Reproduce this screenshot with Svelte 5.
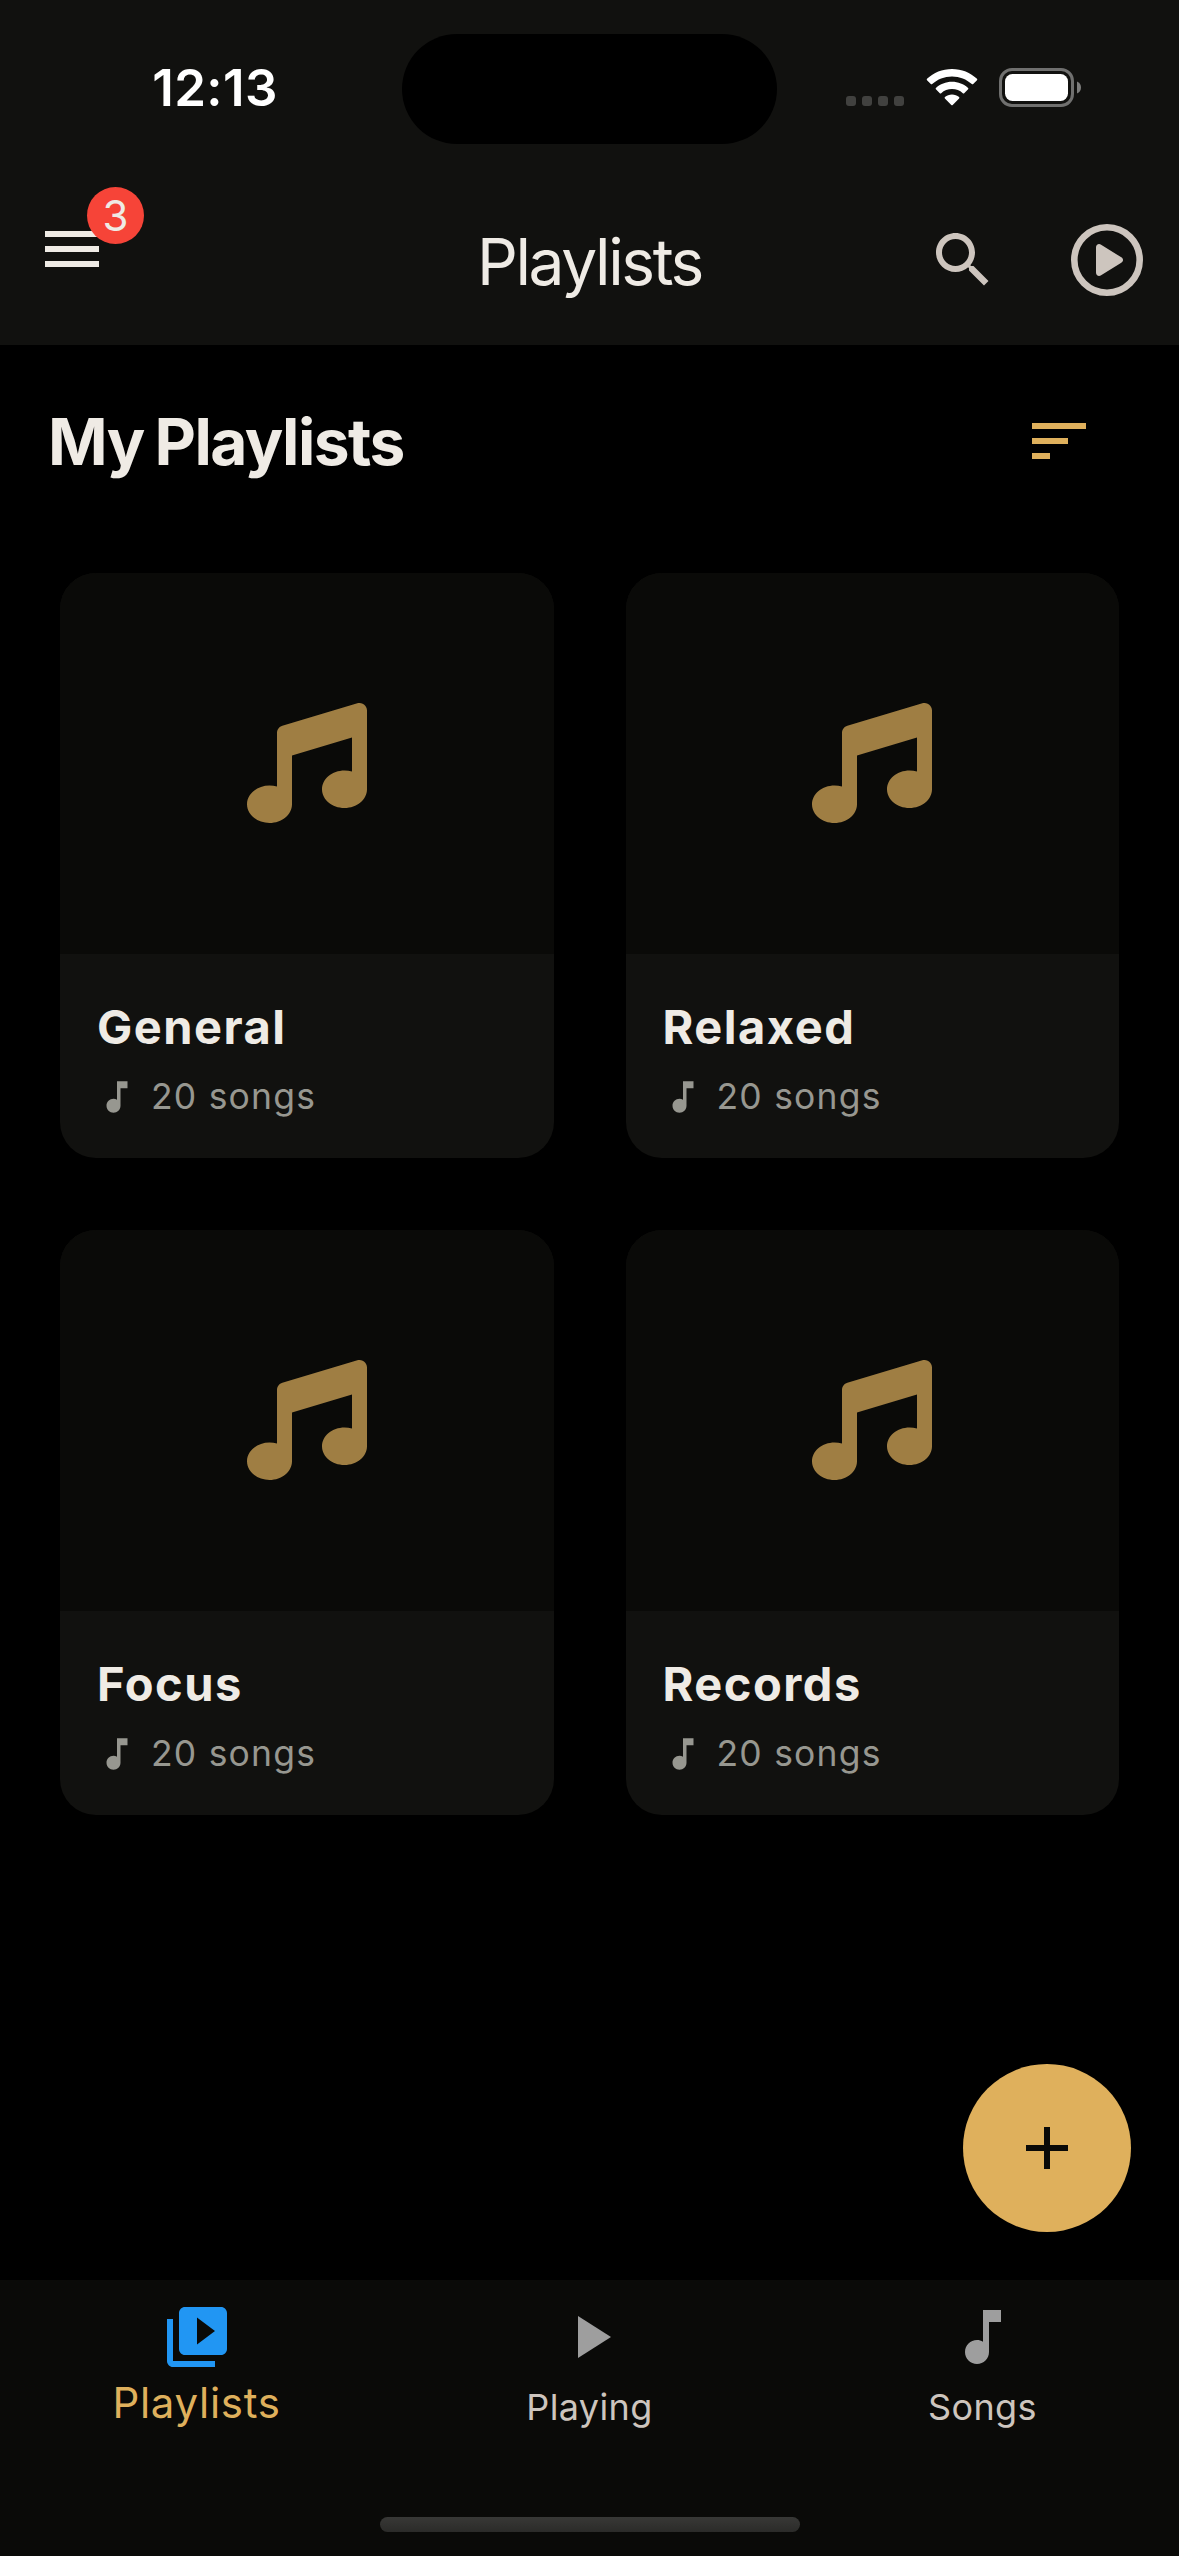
<script lang="ts">
  type Playlist = { name: string; songs: number };
  type Tab = { id: string; label: string; path: string };

  const playlists: Playlist[] = [
    { name: "General", songs: 20 },
    { name: "Relaxed", songs: 20 },
    { name: "Focus", songs: 20 },
    { name: "Records", songs: 20 },
  ];

  const notePath =
    "M12 3v10.55c-.59-.34-1.27-.55-2-.55-2.21 0-4 1.79-4 4s1.79 4 4 4 4-1.79 4-4V7h4V3h-6z";

  const tabs: Tab[] = [
    {
      id: "playlists",
      label: "Playlists",
      path: "M4 6H2v14c0 1.1.9 2 2 2h14v-2H4V6zm16-4H8c-1.1 0-2 .9-2 2v12c0 1.1.9 2 2 2h12c1.1 0 2-.9 2-2V4c0-1.1-.9-2-2-2zm-8 12.5v-9l6 4.5-6 4.5z",
    },
    { id: "playing", label: "Playing", path: "M8 5v14l11-7z" },
    { id: "songs", label: "Songs", path: notePath },
  ];

  let active = $state("playlists");
  let notifications = $state(3);
</script>

<div class="screen">
  <header>
    <div class="status">
      <span class="time">12:13</span>
      <div class="island"></div>
      <div class="indicators">
        <div class="dots">
          {#each [0, 1, 2, 3] as dot (dot)}
            <i></i>
          {/each}
        </div>
        <svg class="wifi" viewBox="0 0 50 37">
          <path d="M25 0C34.700 0 43.500 3.700 50 9.800 50.400 10.200 50.400 10.800 50 11.200L46.200 15C45.800 15.400 45.200 15.400 44.800 15 39.600 10.200 32.600 7.400 25 7.400S10.400 10.200 5.200 15C4.800 15.400 4.200 15.400 3.800 15L0 11.200C-.4 10.800-.4 10.200 0 9.800 6.500 3.700 15.300 0 25 0z" />
          <path d="M25 12.700C31.200 12.700 36.800 15 41.100 18.900 41.500 19.300 41.500 19.900 41.100 20.300L37.200 24.200C36.800 24.600 36.200 24.600 35.800 24.200 32.900 21.600 29.100 20.100 25 20.100S17.100 21.600 14.200 24.200C13.800 24.600 13.200 24.600 12.800 24.200L8.900 20.300C8.500 19.900 8.500 19.300 8.900 18.900 13.200 15 18.800 12.700 25 12.700z" />
          <path d="M25 25.400C27.700 25.400 30.200 26.400 32.100 28 32.500 28.400 32.500 29 32.100 29.400L25.700 35.900C25.300 36.300 24.700 36.300 24.300 35.900L17.900 29.400C17.500 29 17.500 28.400 17.900 28 19.800 26.400 22.300 25.400 25 25.400z" />
        </svg>
        <svg class="battery" viewBox="0 0 82 39">
          <rect x="1.500" y="1.500" width="72" height="36" rx="11.500" fill="none" stroke="#70706f" stroke-width="3" />
          <rect x="6" y="6" width="63" height="27" rx="7.500" fill="#fff" />
          <path d="M78 13.500c2.500 1 4 3.300 4 6s-1.500 5-4 6z" fill="#7d7d7c" />
        </svg>
      </div>
    </div>

    <div class="appbar">
      <button type="button" class="menu" aria-label="Menu">
        <svg viewBox="0 0 24 24"><path d="M3 18h18v-2H3v2zm0-5h18v-2H3v2zm0-7v2h18V6H3z" /></svg>
        {#if notifications > 0}
          <span class="badge">{notifications}</span>
        {/if}
      </button>
      <h1>Playlists</h1>
      <div class="actions">
        <button type="button" aria-label="Search">
          <svg viewBox="0 0 24 24">
            <path d="M15.500 14h-.79l-.28-.27C15.410 12.590 16 11.110 16 9.500 16 5.910 13.090 3 9.500 3S3 5.910 3 9.500 5.910 16 9.500 16c1.610 0 3.090-.59 4.230-1.570l.27.28v.79l5 4.990L20.490 19l-4.990-5zm-6 0C7.010 14 5 11.990 5 9.500S7.010 5 9.500 5 14 7.010 14 9.500 11.990 14 9.500 14z" />
          </svg>
        </button>
        <button type="button" aria-label="Now playing">
          <svg viewBox="0 0 72 72">
            <circle cx="36" cy="36" r="32.700" fill="none" stroke="currentColor" stroke-width="6.600" />
            <path d="M25 23.500c0-3 2.700-4.300 5.100-2.800l20.200 12.600c2.300 1.400 2.300 4 0 5.400L30.100 51.300c-2.400 1.500-5.100.2-5.100-2.800z" />
          </svg>
        </button>
      </div>
    </div>
  </header>

  <main>
    <div class="heading">
      <h2>My Playlists</h2>
      <button type="button" class="sort" aria-label="Sort">
        <svg viewBox="0 0 24 24"><path d="M3 18h6v-2H3v2zM3 6v2h18V6H3zm0 7h12v-2H3v2z" /></svg>
      </button>
    </div>

    <div class="grid">
      {#each playlists as playlist (playlist.name)}
        <article class="card">
          <div class="cover">
            <svg viewBox="0 0 512 512">
              <path d="M499.100 6.300c8.100 6 12.900 15.600 12.900 25.700V368c0 44.200-43 80-96 80s-96-35.800-96-80 43-80 96-80c11.200 0 22 1.600 32 4.600V147L192 223.800V432c0 44.200-43 80-96 80s-96-35.800-96-80 43-80 96-80c11.200 0 22 1.600 32 4.600V128c0-14.100 9.300-26.600 22.800-30.700l320-96c9.700-2.900 20.200-1.100 28.300 5z" />
            </svg>
          </div>
          <div class="info">
            <h3>{playlist.name}</h3>
            <p>
              <svg viewBox="0 0 24 24"><path d={notePath} /></svg>
              <span>{playlist.songs} songs</span>
            </p>
          </div>
        </article>
      {/each}
    </div>

    <button type="button" class="fab" aria-label="New playlist">
      <svg viewBox="0 0 24 24"><path d="M19 13h-6v6h-2v-6H5v-2h6V5h2v6h6v2z" /></svg>
    </button>
  </main>

  <nav>
    {#each tabs as tab (tab.id)}
      <button
        type="button"
        class="tab"
        class:active={tab.id === active}
        onclick={() => (active = tab.id)}
      >
        <svg viewBox="0 0 24 24"><path d={tab.path} /></svg>
        <span>{tab.label}</span>
      </button>
    {/each}
    <div class="home"></div>
  </nav>
</div>

<style>
  :global(body) {
    margin: 0;
    background: #000;
  }
  .screen {
    display: flex;
    flex-direction: column;
    width: 1179px;
    height: 2556px;
    overflow: hidden;
    background: #000;
    color: #efebe5;
    font-family: Inter, Roboto, sans-serif;
  }
  h1,
  h2,
  h3,
  p {
    margin: 0;
    white-space: nowrap;
  }
  button {
    margin: 0;
    padding: 0;
    border: 0;
    background: none;
    color: inherit;
    font: inherit;
  }
  svg {
    display: block;
    width: 72px;
    height: 72px;
    flex: none;
    fill: currentColor;
  }

  header {
    height: 345px;
    background: #11110f;
  }
  .status {
    display: grid;
    grid-template-columns: 402px 375px 1fr;
    align-items: center;
    height: 178px;
    color: #fff;
  }
  .time {
    padding: 0 0 2px 28px;
    text-align: center;
    font-size: 51px;
    font-weight: 600;
    line-height: 60px;
    letter-spacing: 0.4px;
  }
  .island {
    height: 110px;
    border-radius: 55px;
    background: #000;
  }
  .indicators {
    display: flex;
    align-items: center;
    padding-left: 69px;
    padding-bottom: 3px;
  }
  .dots {
    display: flex;
    align-self: flex-end;
    gap: 6px;
    margin-bottom: 1px;
  }
  .dots i {
    width: 10px;
    height: 10px;
    border-radius: 3px;
    background: #41413f;
  }
  .wifi {
    width: 50px;
    height: 37px;
    margin-left: 23px;
    overflow: visible;
  }
  .battery {
    width: 82px;
    height: 39px;
    margin-left: 22px;
  }

  .appbar {
    display: grid;
    grid-template-columns: 1fr auto 1fr;
    align-items: center;
    height: 167px;
  }
  .menu {
    position: relative;
    width: 72px;
    margin: -25px 0 0 36px;
  }
  .badge {
    position: absolute;
    left: 51px;
    top: -26px;
    width: 57px;
    height: 57px;
    border-radius: 50%;
    background: #f64438;
    font-size: 42px;
    line-height: 58px;
    text-align: center;
  }
  h1 {
    padding-top: 1px;
    font-size: 64px;
    font-weight: 400;
    line-height: 78px;
    letter-spacing: -2.4px;
  }
  .actions {
    display: flex;
    align-items: center;
    justify-content: flex-end;
    gap: 72px;
    padding: 0 36px 3px 0;
    color: #cdc5be;
  }

  main {
    position: relative;
    flex: 1;
  }
  .heading {
    display: flex;
    align-items: center;
    justify-content: space-between;
    height: 192px;
    padding: 0 84px 0 48px;
  }
  h2 {
    padding-top: 2px;
    font-size: 64px;
    font-weight: 700;
    line-height: 78px;
    letter-spacing: -1.5px;
    word-spacing: -3px;
  }
  .sort {
    color: #dfb05c;
  }
  .grid {
    display: grid;
    grid-template-columns: 1fr 1fr;
    gap: 72px;
    padding: 36px 60px 0;
  }
  .card {
    height: 585px;
    border-radius: 36px;
    overflow: hidden;
    background: #11110f;
  }
  .cover {
    display: grid;
    place-items: center;
    height: 379px;
    padding-bottom: 2px;
    background: #0a0a08;
    color: #9f7e43;
  }
  .cover svg {
    width: 120px;
    height: 120px;
  }
  .info {
    padding: 43px 36px 0;
  }
  h3 {
    padding-left: 1px;
    font-size: 47px;
    font-weight: 700;
    line-height: 60px;
    letter-spacing: 1.5px;
  }
  p {
    display: flex;
    align-items: center;
    gap: 13px;
    margin-top: 19px;
    color: #979790;
    font-size: 35.5px;
    line-height: 42px;
    letter-spacing: 1.2px;
  }
  p svg {
    width: 42px;
    height: 42px;
  }
  .fab {
    position: absolute;
    right: 48px;
    bottom: 48px;
    display: grid;
    place-items: center;
    width: 168px;
    height: 168px;
    border-radius: 50%;
    background: #dfb05c;
    color: #0a0a08;
  }

  nav {
    position: relative;
    display: grid;
    grid-template-columns: repeat(3, 1fr);
    height: 276px;
    background: #0a0a08;
  }
  .tab {
    display: flex;
    flex-direction: column;
    align-items: center;
    gap: 9px;
    padding-top: 21px;
    color: #cdc5be;
    font-size: 36px;
    line-height: 51px;
    letter-spacing: 0.4px;
  }
  .tab svg {
    color: #9e9e9e;
  }
  .tab.active {
    color: #dfb05c;
    font-size: 42px;
    line-height: 42px;
    letter-spacing: 0.7px;
  }
  .tab.active svg {
    color: #2196f3;
  }
  .home {
    position: absolute;
    left: 380px;
    bottom: 24px;
    width: 420px;
    height: 15px;
    border-radius: 8px;
    background: linear-gradient(#383836, #2b2b29);
  }
</style>
